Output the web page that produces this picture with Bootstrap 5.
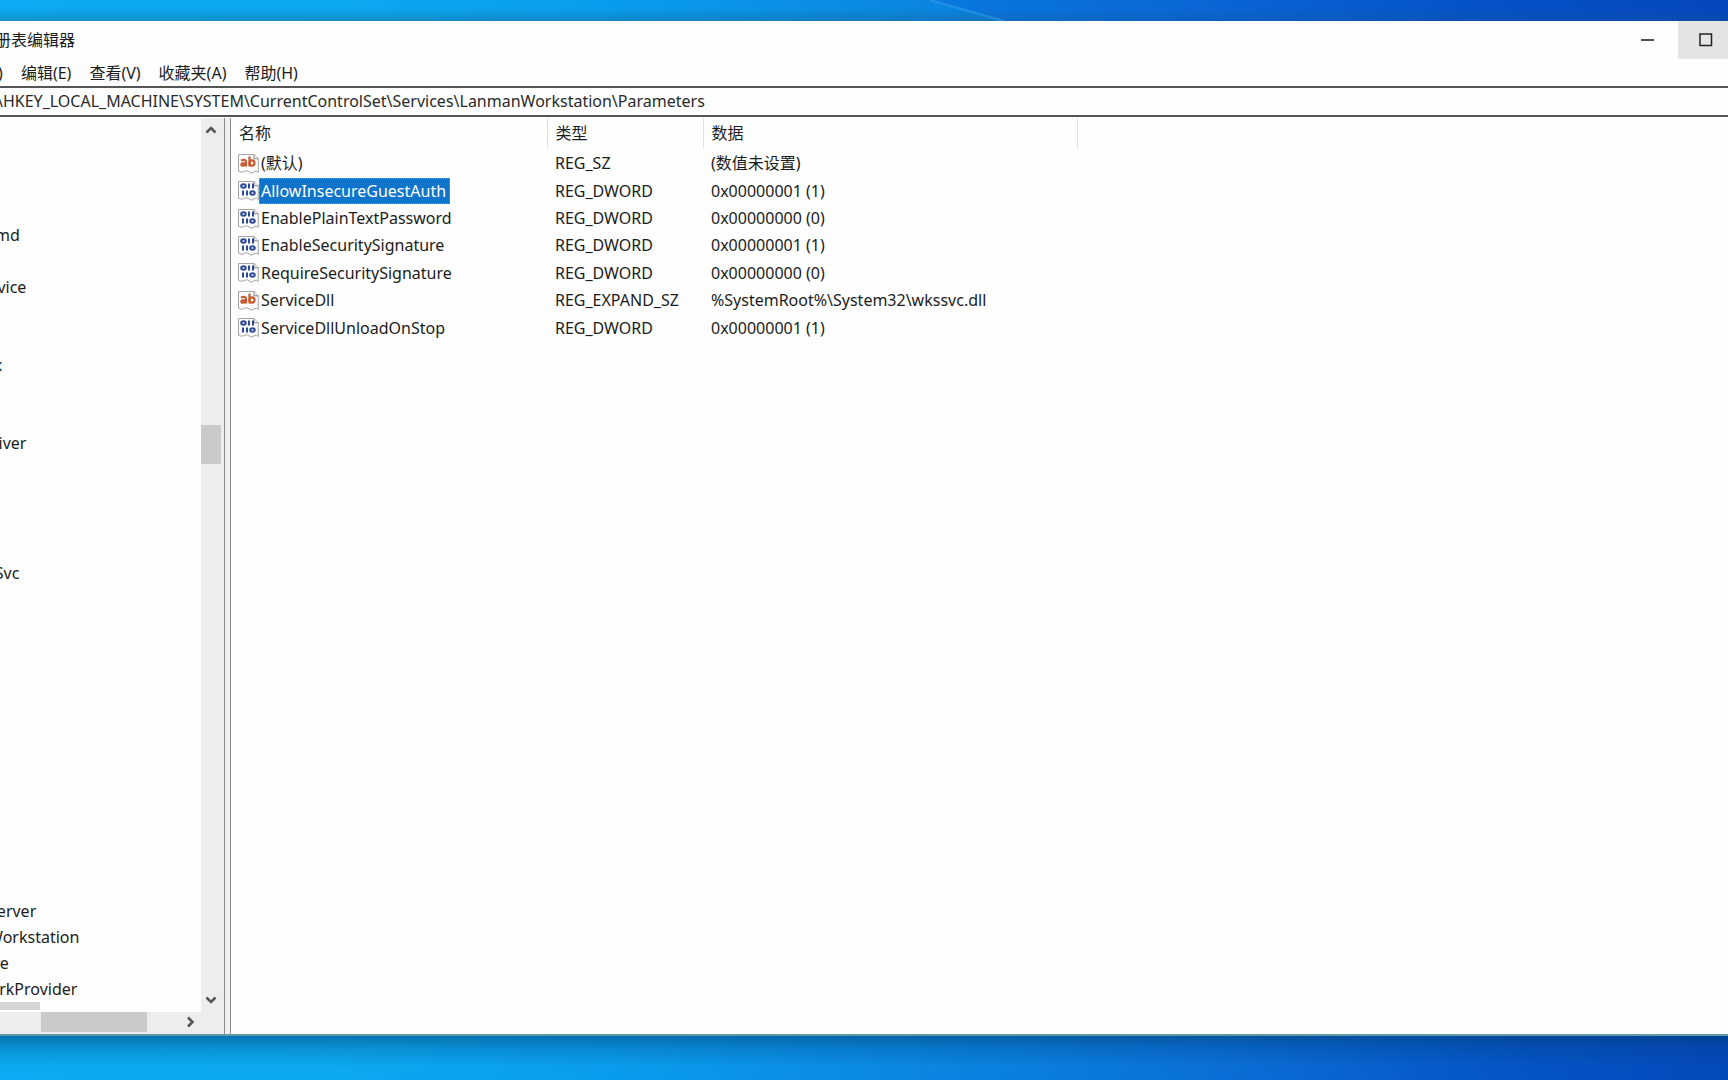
<!DOCTYPE html>
<html lang="zh-CN">
<head>
<meta charset="utf-8">
<meta name="viewport" content="width=device-width, initial-scale=1">
<title>注册表编辑器</title>
<link href="https://cdn.jsdelivr.net/npm/bootstrap@5.3.0/dist/css/bootstrap.min.css" rel="stylesheet">
<style>
body{height:100vh;overflow:hidden;font:16px/20px "Noto Sans","Noto Sans CJK SC",sans-serif;color:#1c1c1c;
 background:linear-gradient(90deg,#0caaf2 0%,#0ca8f0 20%,#0a9cec 36%,#0a88e2 52%,#0a70d8 70%,#0656c8 86%,#0449bc 100%)}
.desk-top{height:21px;background:linear-gradient(180deg,#0000 40%,#1a5a7a55)}
.desk-top svg{display:block;width:100%;height:21px}
.desk-bottom{height:44px;background:linear-gradient(180deg,#003a6a77,#003a6a33 30%,#0000 70%)}
.app-window{background:#fdfefd;border-bottom:2px solid #5f9aa6}
.title-row{height:38px}
.title-text{margin-left:-21px;white-space:nowrap}
.caption-group{margin-right:-6px}
.caption-btn{width:60px;height:38px;border:0;background:none;padding:0 0 4px;color:#222}
.caption-btn.is-hover{width:56px;background:#e3e4e3}
.menu-row{height:27px;gap:18px;margin-left:-47px;white-space:nowrap}
.menu-row a{color:#1c1c1c;text-decoration:none}
.address-box{height:31px;border:solid #555;border-width:2px 0;background:#fdfefd;color:#2a2a2a;padding:0 0 2px;width:100%;outline:0;border-radius:0;text-indent:-3px}
.content-row{padding-top:1px}
.tree-pane{width:224px;overflow:hidden}
.tree-list{line-height:26px;margin-left:-73px;white-space:nowrap}
.tree-list li{height:26px}
.tree-list ul{padding-left:23px}
.picked{background:#d5d5d5;height:8px!important;width:90px}
.v-bar{width:23px;background:#ededed}
.v-thumb{width:20px;height:39px;background:#cacaca}
.track-before{flex-grow:35}
.track-after{flex-grow:65}
.h-bar{height:22px;background:#ededed;padding:0 22px 0 41px}
.h-thumb{width:106px;height:20px;background:#cacaca}
.splitter{width:7px;background:#f0f0f0;border:solid #8c8c8c;border-width:0 1px}
.value-table{table-layout:fixed;width:847px;height:223px}
.value-table th{height:31px;font-weight:400;padding:0 0 2px 8px;border-right:1px solid #e2e2e2}
.value-table td{padding:1px 0 0 8px;white-space:nowrap}
.value-table td:first-child{padding-left:7px}
.value-table svg{width:21px;height:21px;flex:none}
.value-label{padding:0 4px 0 2px;height:26px;line-height:26px}
.value-label.is-active{background:#0f74cb;color:#fff;outline:1px dotted #c9894a;outline-offset:-1px}
</style>
</head>
<body class="d-flex flex-column">
<svg width="0" height="0" class="position-absolute" aria-hidden="true">
 <symbol id="icon-page" viewBox="0 0 21 21">
  <path d="M.5 1.500H16l4.300 4.300V19.500q-2-2.600-4.300-.6-2.500 2.500-5 0-1.800-2.300-4.500-.4-3 1.600-6-.2z" fill="#fbfbfb" stroke="#a3a6a8"/>
  <path d="M16 1.500v4.300h4.300" fill="#e6e6e6" stroke="#8b8e90"/>
 </symbol>
 <symbol id="icon-string" viewBox="0 0 21 21">
  <use href="#icon-page"/>
  <g fill="none" stroke="#c75a30" stroke-width="2.200"><path d="M3 7.500q5-1.800 5 1.500v4.500M8 10q-4.700-.2-4.700 1.700T8 11.800M11.500 3.500v10"/><ellipse cx="14" cy="10" rx="2.500" ry="2.700"/></g>
 </symbol>
 <symbol id="icon-binary" viewBox="0 0 21 21">
  <use href="#icon-page"/>
  <g fill="none" stroke="#2c4a97" stroke-width="2"><ellipse cx="5.500" cy="6" rx="2.300" ry="1.700"/><path d="M11 3.500v5M15 3.500v5M5 10.500v5M9 10.500v5"/><ellipse cx="14.500" cy="13" rx="2.300" ry="1.700"/></g>
 </symbol>
</svg>

<div class="desk-top flex-shrink-0"><svg viewBox="0 0 1728 21" preserveAspectRatio="none" aria-hidden="true"><defs><linearGradient id="beam"><stop offset="0" stop-color="#0650d8" stop-opacity=".25"/><stop offset="1" stop-color="#0640c0" stop-opacity=".3"/></linearGradient></defs><path d="M930 0H1728V21H1004z" fill="url(#beam)"/><path d="M930 0L1004 21" stroke="#4cb0f5" stroke-opacity=".4" stroke-width="2"/></svg></div>

<main class="app-window d-flex flex-column flex-grow-1 overflow-hidden">
 <header class="title-row d-flex align-items-center justify-content-between flex-shrink-0">
  <div class="title-text">注册表编辑器</div>
  <div class="caption-group d-flex">
   <button class="caption-btn" aria-label="最小化"><svg width="14" height="14" viewBox="0 0 14 14"><path d="M0 7h13" stroke="currentColor" stroke-width="1.600"/></svg></button>
   <button class="caption-btn is-hover" aria-label="最大化"><svg width="14" height="14" viewBox="0 0 14 14"><path d="M1 1h11.500v11.500H1z" fill="none" stroke="currentColor" stroke-width="1.500"/></svg></button>
  </div>
 </header>
 <nav class="menu-row d-flex align-items-center flex-shrink-0">
  <a href="#">文件(F)</a><a href="#">编辑(E)</a><a href="#">查看(V)</a><a href="#">收藏夹(A)</a><a href="#">帮助(H)</a>
 </nav>
 <input class="address-box flex-shrink-0" aria-label="地址" value="\HKEY_LOCAL_MACHINE\SYSTEM\CurrentControlSet\Services\LanmanWorkstation\Parameters">
 <div class="content-row d-flex flex-grow-1 overflow-hidden">
  <aside class="tree-pane d-flex flex-column flex-shrink-0">
   <div class="d-flex flex-grow-1 overflow-hidden">
    <div class="flex-grow-1 overflow-hidden">
     <ul class="tree-list list-unstyled mb-0">
      <li></li><li></li><li></li><li></li><li>IndirectKmd</li><li></li><li>InstallService</li><li></li><li></li><li>intelpmax</li><li></li><li></li><li>IpFilterDriver</li><li></li><li></li><li></li><li></li><li>IpxlatCfgSvc</li><li></li><li></li><li></li><li></li><li></li><li></li><li></li><li></li><li></li><li></li><li></li><li></li><li>LanmanServer</li><li>LanmanWorkstation
       <ul class="list-unstyled"><li>Linkage</li><li>NetworkProvider</li><li class="picked"></li></ul></li>
     </ul>
    </div>
    <div class="v-bar d-flex flex-column flex-shrink-0">
     <svg width="20" height="26" viewBox="0 0 20 26"><path d="M5.500 14.500l4.500-4.500 4.500 4.500" fill="none" stroke="#555" stroke-width="2.500"/></svg>
     <div class="track-before"></div><div class="v-thumb"></div><div class="track-after"></div>
     <svg width="20" height="26" viewBox="0 0 20 26"><path d="M5.500 11.500l4.500 4.500 4.500-4.500" fill="none" stroke="#555" stroke-width="2.500"/></svg>
    </div>
   </div>
   <div class="h-bar d-flex justify-content-between flex-shrink-0"><div class="h-thumb"></div><svg width="26" height="20" viewBox="0 0 26 20"><path d="M12 5.500l4.500 4.500-4.500 4.500" fill="none" stroke="#555" stroke-width="2.500"/></svg></div>
  </aside>
  <div class="splitter flex-shrink-0"></div>
  <section class="flex-grow-1">
   <table class="value-table">
    <colgroup><col style="width:316px"><col style="width:156px"><col></colgroup>
    <thead><tr><th>名称</th><th>类型</th><th>数据</th></tr></thead>
    <tbody>
     <tr><td><div class="d-flex align-items-center"><svg><use href="#icon-string"/></svg><span class="value-label">(默认)</span></div></td><td>REG_SZ</td><td>(数值未设置)</td></tr>
     <tr><td><div class="d-flex align-items-center"><svg><use href="#icon-binary"/></svg><span class="value-label is-active">AllowInsecureGuestAuth</span></div></td><td>REG_DWORD</td><td>0x00000001 (1)</td></tr>
     <tr><td><div class="d-flex align-items-center"><svg><use href="#icon-binary"/></svg><span class="value-label">EnablePlainTextPassword</span></div></td><td>REG_DWORD</td><td>0x00000000 (0)</td></tr>
     <tr><td><div class="d-flex align-items-center"><svg><use href="#icon-binary"/></svg><span class="value-label">EnableSecuritySignature</span></div></td><td>REG_DWORD</td><td>0x00000001 (1)</td></tr>
     <tr><td><div class="d-flex align-items-center"><svg><use href="#icon-binary"/></svg><span class="value-label">RequireSecuritySignature</span></div></td><td>REG_DWORD</td><td>0x00000000 (0)</td></tr>
     <tr><td><div class="d-flex align-items-center"><svg><use href="#icon-string"/></svg><span class="value-label">ServiceDll</span></div></td><td>REG_EXPAND_SZ</td><td>%SystemRoot%\System32\wkssvc.dll</td></tr>
     <tr><td><div class="d-flex align-items-center"><svg><use href="#icon-binary"/></svg><span class="value-label">ServiceDllUnloadOnStop</span></div></td><td>REG_DWORD</td><td>0x00000001 (1)</td></tr>
    </tbody>
   </table>
  </section>
 </div>
</main>
<div class="desk-bottom flex-shrink-0"></div>
<script src="https://cdn.jsdelivr.net/npm/bootstrap@5.3.0/dist/js/bootstrap.bundle.min.js"></script>
</body>
</html>
